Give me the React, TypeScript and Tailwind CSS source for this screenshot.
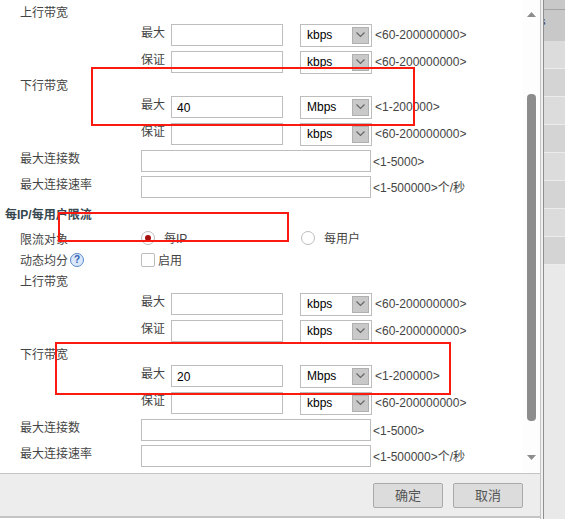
import React from 'react';

function TextBox({ value, className }: { value?: string; className: string }) {
  return (
    <div className={`h-[22px] border border-[#bdbdbd] bg-white pl-[5px] text-[12px] leading-[22px] text-black ${className}`}>
      {value}
    </div>
  );
}

function UnitSelect({ unit }: { unit: string }) {
  return (
    <div className="flex h-[23px] w-[72px] items-center justify-between border border-[#bdbdbd] bg-white pl-[6px] pr-[2px] text-[12px] text-black">
      <span>{unit}</span>
      <span className="flex h-[17px] w-[17px] items-center justify-center border border-[#b0b0b0] bg-[#c9c9c9]">
        <svg width="9" height="6" viewBox="0 0 9 6" fill="none" stroke="#666" strokeWidth="1.2">
          <path d="M0.5 0.5 L4.5 4.5 L8.5 0.5" />
        </svg>
      </span>
    </div>
  );
}

function SectionLabel({ children }: { children: React.ReactNode }) {
  return <span className="translate-y-[1px] text-[#444]">{children}</span>;
}

function BandwidthRow({ label, value, unit, hint, className = '' }: { label: string; value?: string; unit: string; hint: string; className?: string }) {
  return (
    <div className={`flex h-[22px] items-center pl-[141px] ${className}`}>
      <span className="w-[30px] -translate-y-[2px] text-[#444]">{label}</span>
      <TextBox value={value} className="w-[112px]" />
      <div className="ml-[17px]">
        <UnitSelect unit={unit} />
      </div>
      <span className="ml-[3px] text-[#444]">{hint}</span>
    </div>
  );
}

function LimitRow({ label, hint, className = '' }: { label: string; hint: string; className?: string }) {
  return (
    <div className={`flex h-[22px] items-center pl-[20px] ${className}`}>
      <span className="w-[121px] -translate-y-[2px] text-[#444]">{label}</span>
      <TextBox className="w-[230px]" />
      <span className="ml-[2px] translate-y-[1px] text-[#444]">{hint}</span>
    </div>
  );
}

function Radio({ checked, label }: { checked?: boolean; label: string }) {
  return (
    <div className="flex items-center">
      <span className="flex h-[14px] w-[14px] items-center justify-center rounded-full border border-[#bdbdbd] bg-white">
        {checked && <span className="h-[6px] w-[6px] rounded-full bg-[#a80f0f]" />}
      </span>
      <span className="ml-[9px] translate-y-[1px] text-[#444]">{label}</span>
    </div>
  );
}

function SideRows() {
  const rows = ['#dcdcdc', '#d4d4d4', '#dcdcdc', '#d4d4d4', '#dcdcdc', '#d4d4d4', '#dcdcdc', '#d4d4d4'];
  return (
    <div className="flex h-[519px] w-[21px] flex-col overflow-hidden bg-[#e9e9e9]">
      <div className="h-[9px] shrink-0 bg-[#c8c8c8]" />
      <div className="h-px shrink-0 bg-[#a3a3a3]" />
      <div className="flex h-[31px] shrink-0 items-start bg-[#c8c8c8] pt-[6px] text-[11px] leading-none text-[#334]">
        <span className="-ml-[4px]">s</span>
      </div>
      {rows.map((color, i) => (
        <div key={i} className="h-[28px] shrink-0 border-b border-[#ececec]" style={{ backgroundColor: color }} />
      ))}
    </div>
  );
}

export default function App() {
  return (
    <div
      className="relative flex h-[519px] w-[565px] overflow-hidden bg-white text-[12px] leading-none"
      style={{ fontFamily: '"Liberation Sans", "Noto Sans CJK SC", sans-serif' }}
    >
      <div className="flex h-[519px] w-[541px] flex-col border-r border-[#c4c4c4]">
        <div className="flex h-[474px] border-b border-[#c4c4c4]">
          <div className="w-[523px]">
            <div className="flex h-[24px] items-center pl-[20px]"><SectionLabel>上行带宽</SectionLabel></div>
            <BandwidthRow label="最大" unit="kbps" hint="<60-200000000>" />
            <BandwidthRow label="保证" unit="kbps" hint="<60-200000000>" className="mt-[5px]" />
            <div className="flex h-[23px] items-center pl-[20px]"><SectionLabel>下行带宽</SectionLabel></div>
            <BandwidthRow label="最大" value="40" unit="Mbps" hint="<1-200000>" />
            <BandwidthRow label="保证" unit="kbps" hint="<60-200000000>" className="mt-[5px]" />
            <LimitRow label="最大连接数" hint="<1-5000>" className="mt-[5px]" />
            <LimitRow label="最大连接速率" hint="<1-500000>个/秒" className="mt-[4px]" />
            <div className="mt-[11px] pl-[5px] font-bold text-[#36474f]">每IP/每用户限流</div>
            <div className="mt-[9px] flex h-[16px] items-center pl-[20px]">
              <span className="w-[121px] translate-y-[2px] text-[#444]">限流对象</span>
              <div className="w-[160px]">
                <Radio checked label="每IP" />
              </div>
              <Radio label="每用户" />
            </div>
            <div className="mt-[6px] flex h-[16px] items-center pl-[20px]">
              <span className="flex w-[121px] items-center text-[#444]">
                <span className="translate-y-[1px]">动态均分</span>
                <span className="ml-[2px] flex h-[14px] w-[14px] items-center justify-center rounded-full border border-[#5a86c8] bg-[#dbe8fb] text-[10px] font-bold text-[#2f5fae]">?</span>
              </span>
              <span className="h-[14px] w-[14px] rounded-[2px] border border-[#bdbdbd] bg-white" />
              <span className="ml-[3px] translate-y-[1px] text-[#444]">启用</span>
            </div>
            <div className="flex h-[25px] items-center pl-[20px]"><SectionLabel>上行带宽</SectionLabel></div>
            <BandwidthRow label="最大" unit="kbps" hint="<60-200000000>" />
            <BandwidthRow label="保证" unit="kbps" hint="<60-200000000>" className="mt-[5px]" />
            <div className="flex h-[23px] items-center pl-[20px]"><SectionLabel>下行带宽</SectionLabel></div>
            <BandwidthRow label="最大" value="20" unit="Mbps" hint="<1-200000>" />
            <BandwidthRow label="保证" unit="kbps" hint="<60-200000000>" className="mt-[5px]" />
            <LimitRow label="最大连接数" hint="<1-5000>" className="mt-[5px]" />
            <LimitRow label="最大连接速率" hint="<1-500000>个/秒" className="mt-[4px]" />
          </div>
          <div className="flex w-[17px] flex-col items-center bg-[#fdfdfd] pt-[12px]">
            <svg width="9" height="5" viewBox="0 0 9 5" fill="#8c8c8c"><path d="M4.5 0 L9 5 L0 5 Z" /></svg>
            <div className="mt-[77px] h-[327px] w-[9px] rounded-[4px] bg-[#8c8c8c]" />
            <div className="mt-[34px]">
              <svg width="9" height="5" viewBox="0 0 9 5" fill="#8c8c8c"><path d="M0 0 L9 0 L4.5 5 Z" /></svg>
            </div>
          </div>
        </div>
        <div className="flex h-[44px] items-start justify-end gap-[10px] border-b-2 border-[#c4c4c4] bg-[#ededed] pr-[17px] pt-[9px]">
          <div className="flex h-[25px] w-[70px] items-center justify-center rounded-[2px] border border-[#aaa] bg-[#dcdcdc] text-[13px] text-[#555]">确定</div>
          <div className="flex h-[25px] w-[70px] items-center justify-center rounded-[2px] border border-[#aaa] bg-[#dcdcdc] text-[13px] text-[#555]">取消</div>
        </div>
      </div>
      <div className="w-[2px] bg-[#f0f0f0]" />
      <div className="w-px bg-[#8f8f8f]" />
      <SideRows />

      {/* annotation boxes drawn on top of the form */}
      <div className="absolute left-[91px] top-[67px] h-[59px] w-[324px] border-[2px] border-[#fb1a10]" />
      <div className="absolute left-[58px] top-[212px] h-[30px] w-[231px] border-[2px] border-[#fb1a10]" />
      <div className="absolute left-[55px] top-[342px] h-[53px] w-[396px] border-[2px] border-[#fb1a10]" />
    </div>
  );
}
